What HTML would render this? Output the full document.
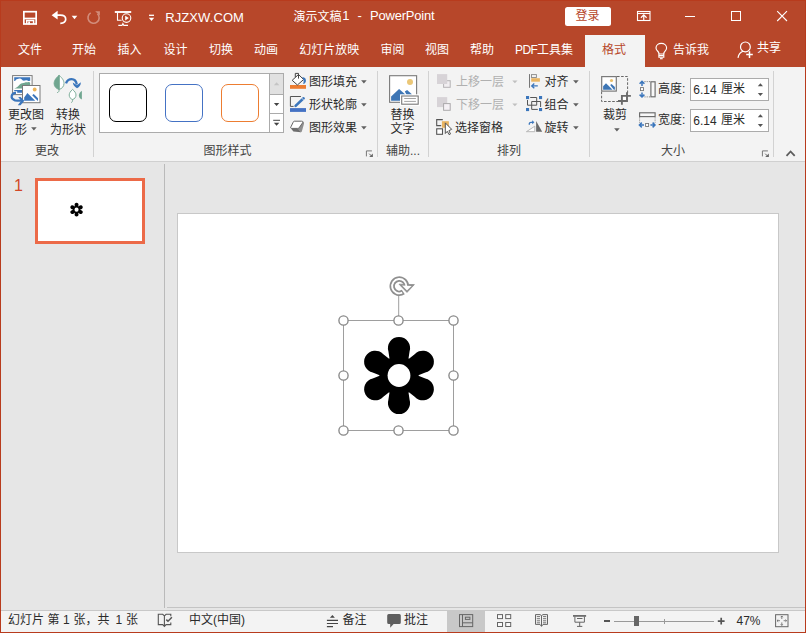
<!DOCTYPE html>
<html lang="zh-CN"><head><meta charset="utf-8"><title>演示文稿1 - PowerPoint</title>
<style>
html,body{margin:0;padding:0;}
body{width:806px;height:633px;overflow:hidden;background:#E6E6E6;font-family:"Liberation Sans","Noto Sans CJK SC",sans-serif;}
#app{position:relative;width:806px;height:633px;overflow:hidden;background:#E6E6E6;}
.t,.l,.b,.i{position:absolute;}
.t{height:12px;line-height:12px;font-size:12px;white-space:pre;font-family:"Liberation Sans","Noto Sans CJK SC",sans-serif;}
.l{white-space:pre;}
.b{box-sizing:border-box;}
</style></head>
<body>
<div id="app">
<div class="b" style="left:0px;top:0px;width:806px;height:67px;background:#B7472A;"></div>
<div class="b" style="left:585px;top:35px;width:60px;height:32px;background:#F3F3F3;"></div>
<div class="b" style="left:0px;top:67px;width:806px;height:95px;background:#F3F3F3;border-bottom:1px solid #D0D0D0;"></div>
<div class="b" style="left:0px;top:610px;width:806px;height:23px;background:#F3F3F3;border-top:1px solid #C8C8C8;"></div>
<div class="l" style="left:165.3px;top:11.2px;color:#FFFFFF;font-size:13px;line-height:13px;letter-spacing:0.08px;">RJZXW.COM</div>
<div class="t" style="left:293.5px;top:10.5px;color:#FFFFFF;">演示文稿</div>
<div class="l" style="left:342.3px;top:9.3px;color:#FFFFFF;font-size:13px;line-height:13px;">1</div>
<div class="l" style="left:357.6px;top:9.3px;color:#FFFFFF;font-size:13px;line-height:13px;">-</div>
<div class="l" style="left:370px;top:9.3px;color:#FFFFFF;font-size:13px;line-height:13px;letter-spacing:-0.22px;">PowerPoint</div>
<div class="b" style="left:565px;top:7px;width:46px;height:18.7px;background:#FFFFFF;border-radius:2.5px;"></div>
<div class="t" style="left:575.5px;top:10.1px;color:#B7472A;">登录</div>
<svg class="i" style="left:20px;top:8px" width="20" height="20" viewBox="0 0 20 20"><g fill="none" stroke="#fff" stroke-width="1.7"><rect x="3.85" y="3.7" width="12.3" height="12.3"/><path d="M4 10.5H16"/><path d="M6.7 16V12.6H13.6V16" stroke-width="1.5"/></g><rect x="8.2" y="13.4" width="1.8" height="3" fill="#fff"/></svg>
<svg class="i" style="left:50px;top:8px" width="20" height="18" viewBox="0 0 20 18"><path d="M3 7.2H10.3C13.6 7.2 15.7 8.9 15.7 11.2C15.7 13.5 13.6 15.2 10.3 15.3" fill="none" stroke="#fff" stroke-width="1.7"/><path d="M1.6 7.2L7.6 2.8V11.4Z" fill="#fff"/></svg>
<svg class="i" style="left:71px;top:15px" width="7" height="5" viewBox="0 0 7 5"><path d="M0.7 0.8H6.3L3.5 4.3Z" fill="#fff"/></svg>
<svg class="i" style="left:85px;top:8px" width="18" height="18" viewBox="0 0 18 18"><g opacity="0.38"><path d="M5.7 4.9A5.6 5.6 0 1 0 12.5 5.7" fill="none" stroke="#fff" stroke-width="1.6"/><path d="M10.2 3.3H14.9V7.6Z" fill="#fff"/></g></svg>
<svg class="i" style="left:113px;top:9px" width="20" height="18" viewBox="0 0 20 18"><g fill="none" stroke="#fff"><path d="M1.8 3H18.2" stroke-width="1.9"/><path d="M4.5 3.5V11.2H8.6" stroke-width="1.1"/><circle cx="13.5" cy="9.1" r="4.3" stroke-width="1.1"/><path d="M5.3 16.4H9L9.9 14.6L10.8 16.4H15" stroke-width="1.1"/></g><path d="M12.2 6.7L15.8 9.1L12.2 11.5Z" fill="#fff"/></svg>
<svg class="i" style="left:147px;top:13px" width="9" height="9" viewBox="0 0 9 9"><path d="M2 2.3H7" stroke="#fff" stroke-width="1.3"/><path d="M1.8 4.8H7.2L4.5 8.1Z" fill="#fff"/></svg>
<svg class="i" style="left:635px;top:9px" width="18" height="14" viewBox="0 0 18 14"><g fill="none" stroke="#fff" stroke-width="1.1"><rect x="2.5" y="2.5" width="12.5" height="9"/><path d="M2.5 4.5H15"/><path d="M8.75 11.5V6.1M5.9 8.7L8.75 5.9L11.6 8.7" stroke-width="1.2"/></g></svg>
<div class="b" style="left:685px;top:16px;width:10px;height:1px;background:#fff;"></div>
<div class="b" style="left:731px;top:11px;width:10px;height:10px;border:1px solid #fff;"></div>
<svg class="i" style="left:775px;top:9px" width="14" height="14" viewBox="0 0 14 14"><path d="M2.2 2.2L12 12M12 2.2L2.2 12" stroke="#fff" stroke-width="1.1" fill="none"/></svg>
<svg class="i" style="left:653px;top:41px" width="17" height="20" viewBox="0 0 17 20"><g fill="none" stroke="#fff" stroke-width="1.15"><path d="M5.9 13V12.2C5.9 10.6 3 9.6 3 6.9C3 4.2 5.4 2.4 8.3 2.4C11.2 2.4 13.6 4.2 13.6 6.9C13.6 9.6 10.8 10.6 10.8 12.2V13"/><path d="M5.9 13H10.8V16.2H5.9Z"/><path d="M5.9 14.6H10.8"/><path d="M7 17.7H9.7"/></g></svg>
<svg class="i" style="left:735px;top:40px" width="20" height="20" viewBox="0 0 20 20"><g fill="none" stroke="#fff" stroke-width="1.2"><circle cx="10.4" cy="6.9" r="4.9"/><path d="M3 17.8C3.6 14.2 5.6 12.2 8 11.3"/><path d="M11.2 14.6H17.8M14.5 11.3V17.9" stroke-width="1.5"/></g></svg>
<div class="t" style="left:18px;top:44px;color:#FFFFFF;">文件</div>
<div class="t" style="left:72px;top:44px;color:#FFFFFF;">开始</div>
<div class="t" style="left:117.5px;top:44px;color:#FFFFFF;">插入</div>
<div class="t" style="left:163.5px;top:44px;color:#FFFFFF;">设计</div>
<div class="t" style="left:209px;top:44px;color:#FFFFFF;">切换</div>
<div class="t" style="left:254px;top:44px;color:#FFFFFF;">动画</div>
<div class="t" style="left:299.3px;top:44px;color:#FFFFFF;">幻灯片放映</div>
<div class="t" style="left:380.5px;top:44px;color:#FFFFFF;">审阅</div>
<div class="t" style="left:425px;top:44px;color:#FFFFFF;">视图</div>
<div class="t" style="left:470px;top:44px;color:#FFFFFF;">帮助</div>
<div class="l" style="left:515px;top:44.4px;color:#FFFFFF;font-size:12px;line-height:12px;letter-spacing:-0.6px;">PDF</div>
<div class="t" style="left:537px;top:44px;color:#FFFFFF;">工具集</div>
<div class="t" style="left:602px;top:44px;color:#B7472A;">格式</div>
<div class="t" style="left:673px;top:44.2px;color:#FFFFFF;">告诉我</div>
<div class="t" style="left:757px;top:42px;color:#FFFFFF;">共享</div>
<div class="b" style="left:93px;top:71px;width:1px;height:86px;background:#D2D2D2;"></div>
<div class="b" style="left:377px;top:71px;width:1px;height:86px;background:#D2D2D2;"></div>
<div class="b" style="left:428px;top:71px;width:1px;height:86px;background:#D2D2D2;"></div>
<div class="b" style="left:589px;top:71px;width:1px;height:86px;background:#D2D2D2;"></div>
<div class="b" style="left:773px;top:71px;width:1px;height:86px;background:#D2D2D2;"></div>
<div class="t" style="left:35px;top:145px;color:#444444;">更改</div>
<div class="t" style="left:203.5px;top:145px;color:#444444;">图形样式</div>
<div class="t" style="left:386px;top:145px;color:#444444;">辅助</div>
<div class="l" style="left:410px;top:145px;color:#444444;font-size:12px;line-height:12px;">...</div>
<div class="t" style="left:497px;top:145px;color:#444444;">排列</div>
<div class="t" style="left:661px;top:145px;color:#444444;">大小</div>
<svg class="i" style="left:4px;top:70px" width="45" height="38" viewBox="0 0 45 38">
<rect x="8.6" y="5.6" width="19.5" height="19" fill="#fff" stroke="#7A7A7A" stroke-width="1"/>
<path d="M10.2 7.2H26.2V10.8C24.5 11.4 23.5 10 22 10.2C20.5 10.5 20 11.2 18.5 10.3C17.5 8.3 15 7.9 13.5 9C12.2 9.2 11.6 10 11.2 11H10.2Z" fill="#3B76BC"/>
<path d="M10.2 18.4C13 17.8 14.5 16 16 14.2C17.5 12.8 19 13.4 20.5 12.8C22 11.8 23.5 12.6 24.5 12C25.5 11.8 26 12.5 26.2 13.2V18.4Z" fill="#70A690"/>
<path d="M10.2 20H26.2V22.8H13.2V21.2H10.2Z" fill="#3B76BC"/>
<rect x="18.5" y="15.5" width="17.5" height="17.2" fill="#fff" stroke="#7A7A7A" stroke-width="1"/>
<circle cx="30.7" cy="19.5" r="1.9" fill="#EDB458"/>
<path d="M20.2 30.7V27.5L23.4 23.1L31.2 30.7Z" fill="#3B76BC"/>
<path d="M28.2 25.3L29.7 24L34 28.3V30.7H33.6Z" fill="#3B76BC"/>
<path d="M12 22.8C7.5 22.6 5.5 28.6 11 30.3C12.5 30.7 14.5 30.7 17.5 30.7" fill="none" stroke="#3B76BC" stroke-width="2.3"/>
<path d="M14.2 27H16.6L20.3 30.7L16.6 35.2H13.8L17.2 30.7Z" fill="#3B76BC"/>
</svg>
<svg class="i" style="left:48px;top:70px" width="45" height="38" viewBox="0 0 45 38">
<path d="M11.1 5.3C14.8 8.5 16 11 16 13.5C16 16.5 14 18.6 11.1 19.5Z" fill="#fff" stroke="#70A690" stroke-width="0.9"/>
<path d="M11.1 5.3C7.4 8.5 6.1 11 6.1 13.5C6.1 16.5 8.2 18.6 11.1 19.5Z" fill="#70A690" stroke="#70A690" stroke-width="0.9"/>
<path d="M11.1 19.5C11.1 21.5 10.6 22.4 9.2 22.6" fill="none" stroke="#70A690" stroke-width="0.9"/>
<path d="M18 13.3C20 8 27.5 7 28.8 14.5" fill="none" stroke="#3B76BC" stroke-width="2.3"/>
<path d="M24.8 12.6L28.9 15.2L32.8 12.2C33 15 31.5 17 29 18.2C26.5 17 25 15.2 24.8 12.6Z" fill="#3B76BC"/>
<path d="M24.6 19.4C27 21.5 28 23.3 28 25C28 27.2 26.7 28.9 24.6 29.5C22.5 28.9 21.2 27.2 21.2 25C21.2 23.3 22.2 21.5 24.6 19.4Z" fill="#fff" stroke="#70A690" stroke-width="0.9"/>
<path d="M24.6 29.5C24.6 31.4 24.2 32.3 23.2 32.6" fill="none" stroke="#70A690" stroke-width="0.9"/>
<path d="M33.9 20.8C31.6 22.6 30.9 24 30.9 25.4C30.9 27.2 32 28.7 33.9 29.4Z" fill="#70A690"/>
</svg>
<svg class="i" style="left:31px;top:127px" width="6" height="4" viewBox="0 0 6 4"><path d="M0.1 0.2H5.7L2.9 3.4Z" fill="#606060"/></svg>
<div class="t" style="left:8px;top:109px;color:#2B2B2B;">更改图</div>
<div class="t" style="left:15px;top:123.5px;color:#2B2B2B;">形</div>
<div class="t" style="left:56px;top:109px;color:#2B2B2B;">转换</div>
<div class="t" style="left:50px;top:123.5px;color:#2B2B2B;">为形状</div>
<div class="b" style="left:99px;top:73px;width:185px;height:60px;background:#FFFFFF;border:1px solid #ABABAB;"></div>
<div class="b" style="left:269px;top:74px;width:1px;height:58px;background:#ABABAB;"></div>
<div class="b" style="left:270px;top:74px;width:13px;height:20px;background:#E1E1E1;"></div>
<div class="b" style="left:270px;top:94px;width:13px;height:1px;background:#ABABAB;"></div>
<div class="b" style="left:270px;top:113px;width:13px;height:1px;background:#ABABAB;"></div>
<div class="b" style="left:109px;top:84px;width:38px;height:38px;border:1px solid #000000;border-radius:7px;"></div>
<div class="b" style="left:165px;top:84px;width:38px;height:38px;border:1px solid #4472C4;border-radius:7px;"></div>
<div class="b" style="left:221px;top:84px;width:38px;height:38px;border:1px solid #ED7D31;border-radius:7px;"></div>
<svg class="i" style="left:270px;top:74px" width="13" height="58" viewBox="0 0 13 58">
<path d="M3.9 11.2L6.6 8.2L9.3 11.2Z" fill="#C4C4C4"/>
<path d="M3.9 29.1H9.3L6.6 32.1Z" fill="#444444"/>
<path d="M3.2 46.3H10" stroke="#444444" stroke-width="1" fill="none"/>
<path d="M3.9 48.8H9.3L6.6 51.8Z" fill="#444444"/>
</svg>
<svg class="i" style="left:288px;top:70px" width="22" height="22" viewBox="0 0 22 22">
<rect x="2" y="15" width="16" height="3.8" fill="#ED7D31"/>
<path d="M4.2 10.3L10.5 4.5L15.6 9.5L9.4 15Z" fill="#fff" stroke="#444444" stroke-width="1"/>
<path d="M7.3 7.2V3.4H10.5V8.6" fill="none" stroke="#444444" stroke-width="1"/>
<path d="M14.2 7C17 7.2 18.3 9 17.9 11.2C17.6 12.8 16.5 13.8 15.1 14.1C15.6 12.6 15.9 11.2 15.4 9.7Z" fill="#3B76BC"/>
</svg>
<svg class="i" style="left:288px;top:93px" width="22" height="22" viewBox="0 0 22 22">
<rect x="2" y="15.1" width="16" height="3.8" fill="#4472C4"/>
<path d="M12.9 3.5H2.4V13.4H5.6" fill="none" stroke="#555" stroke-width="1"/>
<path d="M7.6 12.9L15.6 5.3" stroke="#3B76BC" stroke-width="2.6" stroke-linecap="round" fill="none"/>
<path d="M6.9 13.7L7.6 11.6L9.2 13Z" fill="#3B76BC"/>
<path d="M13.6 4.9L16 7.4" stroke="#F3F3F3" stroke-width="0.7" fill="none"/>
</svg>
<svg class="i" style="left:288px;top:116px" width="22" height="22" viewBox="0 0 22 22">
<path d="M2.8 12.3L5.4 15.6L13 16.2L10 12.3Z" fill="#6E6E6E"/>
<path d="M14.4 5.2C16 5.8 16.4 7 15.8 8.6L13.9 15.2C13.6 16 13.2 16.3 12.6 16.2L9.8 12.4Z" fill="#8E8E8E"/>
<path d="M6.4 5.2H13.6C14.9 5.2 15.1 5.9 14.5 6.9L11.1 11.8C10.7 12.3 10.3 12.4 9.7 12.4H3.9C2.6 12.4 2.3 11.8 2.9 10.9L5.2 6.2C5.5 5.5 5.8 5.2 6.4 5.2Z" fill="#fff" stroke="#666" stroke-width="1"/>
</svg>
<svg class="i" style="left:360.5px;top:80px" width="6" height="4" viewBox="0 0 6 4"><path d="M0.1 0.2H5.7L2.9 3.4Z" fill="#606060"/></svg>
<svg class="i" style="left:360.5px;top:103px" width="6" height="4" viewBox="0 0 6 4"><path d="M0.1 0.2H5.7L2.9 3.4Z" fill="#606060"/></svg>
<svg class="i" style="left:360.5px;top:126px" width="6" height="4" viewBox="0 0 6 4"><path d="M0.1 0.2H5.7L2.9 3.4Z" fill="#606060"/></svg>
<svg class="i" style="left:365px;top:149.5px" width="9" height="8" viewBox="0 0 9 8"><path d="M1.4 6.4V0.9H6.9" fill="none" stroke="#777" stroke-width="1"/><path d="M4.2 3.7L6.4 5.9" stroke="#666" stroke-width="1"/><path d="M7.9 3.6V7.1H4.2Z" fill="#666"/></svg>
<svg class="i" style="left:761px;top:149.5px" width="9" height="8" viewBox="0 0 9 8"><path d="M1.4 6.4V0.9H6.9" fill="none" stroke="#777" stroke-width="1"/><path d="M4.2 3.7L6.4 5.9" stroke="#666" stroke-width="1"/><path d="M7.9 3.6V7.1H4.2Z" fill="#666"/></svg>
<div class="t" style="left:309px;top:75.5px;color:#2B2B2B;">图形填充</div>
<div class="t" style="left:309px;top:98.5px;color:#2B2B2B;">形状轮廓</div>
<div class="t" style="left:309px;top:121.5px;color:#2B2B2B;">图形效果</div>
<svg class="i" style="left:386px;top:72px" width="36" height="36" viewBox="0 0 36 36">
<rect x="3.6" y="3.7" width="27" height="26.6" fill="#fff" stroke="#7A7A7A" stroke-width="1.1"/>
<circle cx="24" cy="9.9" r="3" fill="#EBC777"/>
<path d="M5.1 28.7V24.4L13.1 17.1L18.5 21.8L21 24.5V28.7Z" fill="#3E76B5"/>
<path d="M18.8 19.6L21.1 18.1L25.6 21.9L26 24.5H21.5Z" fill="#3E76B5"/>
<rect x="15.2" y="23.5" width="17.5" height="9.2" fill="#fff" stroke="#fff" stroke-width="2.4"/>
<rect x="15.7" y="24" width="16.5" height="8.2" fill="#fff" stroke="#7A7A7A" stroke-width="1.1"/>
<path d="M18.2 26.5H29.9M18.2 29.4H29.9" stroke="#9A9A9A" stroke-width="0.9" fill="none"/>
</svg>
<svg class="i" style="left:435px;top:72px" width="18" height="18" viewBox="0 0 18 18">
<rect x="8.6" y="8.7" width="6.6" height="6.6" fill="#F1EEF1" stroke="#B4B2B4" stroke-width="1"/>
<rect x="2" y="2.1" width="10.2" height="9.9" fill="#D7D3D7"/>
</svg>
<svg class="i" style="left:435px;top:95px" width="18" height="18" viewBox="0 0 18 18">
<rect x="2" y="2.1" width="10.2" height="10" fill="#D7D3D7"/>
<rect x="8.6" y="8.6" width="6.6" height="6.7" fill="#F5F1F5" stroke="#ABA9AB" stroke-width="1"/>
</svg>
<svg class="i" style="left:434px;top:117px" width="20" height="20" viewBox="0 0 20 20">
<path d="M8.8 2.6H2.7V8.6H7.2" fill="none" stroke="#555" stroke-width="1.1"/>
<rect x="2.7" y="11.8" width="5.8" height="5.5" fill="#fff" stroke="#555" stroke-width="1.1"/>
<rect x="7.9" y="4.2" width="7" height="6.6" fill="#E9B563"/>
<path d="M11.3 5.9V16.5L13.3 14.3L15 17.6L16.5 17L14.9 13.7L17.7 12.3Z" fill="#fff" stroke="#555" stroke-width="1"/>
</svg>
<svg class="i" style="left:512.3px;top:80px" width="6" height="4" viewBox="0 0 6 4"><path d="M0.3 0.4H5.5L2.9 3.2Z" fill="#C0C0C0"/></svg>
<svg class="i" style="left:512.3px;top:103px" width="6" height="4" viewBox="0 0 6 4"><path d="M0.3 0.4H5.5L2.9 3.2Z" fill="#C0C0C0"/></svg>
<svg class="i" style="left:526px;top:72px" width="18" height="18" viewBox="0 0 18 18">
<path d="M3.5 2.1V15.8" stroke="#777" stroke-width="1" fill="none"/>
<rect x="5.5" y="2.6" width="4.9" height="2.9" fill="none" stroke="#888" stroke-width="0.9"/>
<rect x="5.2" y="6.2" width="8.7" height="3.5" fill="#E9B563"/>
<path d="M11.8 13.9H6M8.3 11.5L5.7 13.9L8.3 16.3" fill="none" stroke="#3B76BC" stroke-width="1.3"/>
</svg>
<svg class="i" style="left:524px;top:94px" width="20" height="20" viewBox="0 0 20 20">
<g fill="#3B76BC"><rect x="2" y="2" width="3.1" height="3.1"/><rect x="15" y="2" width="3.1" height="3.1"/><rect x="2" y="14" width="3.1" height="3.1"/><rect x="15" y="14" width="3.1" height="3.1"/></g>
<g fill="none" stroke="#555" stroke-width="1"><path d="M6.2 3.5H12.7V11.2H3.5V6"/><path d="M16.6 13V7.5H7.7V15.4H13.8"/></g>
</svg>
<svg class="i" style="left:524px;top:118px" width="20" height="16" viewBox="0 0 20 16">
<path d="M2.4 13.7H10.8V8.2Z" fill="#fff" stroke="#B0B0B0" stroke-width="0.9"/>
<path d="M12.1 3V13.8H18.2Z" fill="#6A6A6A"/>
<path d="M5.3 6.8V5.8C5.3 4.8 6 4.3 7 4.3H9" fill="none" stroke="#3B76BC" stroke-width="1.3"/>
<path d="M8.2 2.3L10.4 4.3L8.2 6.3Z" fill="#3B76BC"/>
</svg>
<svg class="i" style="left:572.7px;top:80px" width="6" height="4" viewBox="0 0 6 4"><path d="M0.1 0.2H5.7L2.9 3.4Z" fill="#606060"/></svg>
<svg class="i" style="left:572.7px;top:103px" width="6" height="4" viewBox="0 0 6 4"><path d="M0.1 0.2H5.7L2.9 3.4Z" fill="#606060"/></svg>
<svg class="i" style="left:572.7px;top:126px" width="6" height="4" viewBox="0 0 6 4"><path d="M0.1 0.2H5.7L2.9 3.4Z" fill="#606060"/></svg>
<div class="t" style="left:390.5px;top:109px;color:#2B2B2B;">替换</div>
<div class="t" style="left:390.5px;top:123px;color:#2B2B2B;">文字</div>
<div class="t" style="left:456px;top:75.5px;color:#B0B0B0;">上移一层</div>
<div class="t" style="left:456px;top:98.5px;color:#B0B0B0;">下移一层</div>
<div class="t" style="left:455px;top:121.5px;color:#2B2B2B;">选择窗格</div>
<div class="t" style="left:544.5px;top:75.5px;color:#2B2B2B;">对齐</div>
<div class="t" style="left:544.5px;top:98.5px;color:#2B2B2B;">组合</div>
<div class="t" style="left:544.5px;top:121.5px;color:#2B2B2B;">旋转</div>
<svg class="i" style="left:598px;top:72px" width="36" height="36" viewBox="0 0 36 36">
<path d="M19 4.5H29.6V21M3.6 19.6V29.5H20" fill="none" stroke="#666" stroke-width="1" stroke-dasharray="2.6 1.5"/>
<rect x="3.7" y="4.6" width="14.6" height="14.5" fill="#fff" stroke="#7A7A7A" stroke-width="1.2"/>
<circle cx="13.5" cy="8.5" r="1.6" fill="#EBC06A"/>
<path d="M5.1 17.7V14.2L8 11.3L14.6 17.7Z" fill="#3E76B5"/>
<path d="M12.2 13L13.5 12.1L16.9 15.1V17.7H15.8Z" fill="#3E76B5"/>
<rect x="24" y="24" width="5" height="5" fill="#fff"/>
<path d="M29 20.2V29H20M23.9 32.8V23.9H32.9" fill="none" stroke="#6A6A6A" stroke-width="1.9"/>
</svg>
<svg class="i" style="left:614px;top:127.5px" width="6" height="4" viewBox="0 0 6 4"><path d="M0.1 0.2H5.7L2.9 3.4Z" fill="#606060"/></svg>
<svg class="i" style="left:636px;top:78px" width="22" height="22" viewBox="0 0 22 22">
<rect x="14.9" y="3.8" width="4.2" height="15" fill="#F8F8F8" stroke="#6A6A6A" stroke-width="1.15"/>
<path d="M8.5 3.6H14M8.5 18.9H14" stroke="#777" stroke-width="1" stroke-dasharray="1 1.2" fill="none"/>
<rect x="4.5" y="9.6" width="3" height="3" fill="#fff" stroke="#777" stroke-width="0.9"/>
<path d="M6 8V4M3.6 5.8L6 3.4L8.4 5.8M6 14.4V18.4M3.6 16.6L6 19L8.4 16.6" fill="none" stroke="#3B76BC" stroke-width="1.5"/>
</svg>
<svg class="i" style="left:636px;top:109px" width="22" height="22" viewBox="0 0 22 22">
<rect x="3.6" y="3.8" width="15.5" height="3.8" fill="#F8F8F8" stroke="#6A6A6A" stroke-width="1.15"/>
<path d="M3.6 8.4V13.6M19.1 8.4V13.6" stroke="#777" stroke-width="1" stroke-dasharray="1 1.2" fill="none"/>
<rect x="9.6" y="14.5" width="3" height="3" fill="#fff" stroke="#777" stroke-width="0.9"/>
<path d="M8 16H3.8M5.8 13.6L3.4 16L5.8 18.4M14.4 16H18.6M16.6 13.6L19 16L16.6 18.4" fill="none" stroke="#3B76BC" stroke-width="1.5"/>
</svg>
<svg class="i" style="left:784px;top:148px" width="14" height="11" viewBox="0 0 14 11"><path d="M2.5 7.8L6.6 3.5L10.7 7.8" fill="none" stroke="#5C5C5C" stroke-width="1.8"/></svg>
<div class="t" style="left:603px;top:109px;color:#2B2B2B;">裁剪</div>
<div class="t" style="left:658px;top:83px;color:#2B2B2B;">高度</div>
<div class="l" style="left:682px;top:83px;color:#2B2B2B;font-size:12px;line-height:12px;">:</div>
<div class="t" style="left:658px;top:114px;color:#2B2B2B;">宽度</div>
<div class="l" style="left:682px;top:114px;color:#2B2B2B;font-size:12px;line-height:12px;">:</div>
<div class="b" style="left:690px;top:78px;width:79px;height:23px;background:#FFFFFF;border:1px solid #ABABAB;"></div>
<div class="l" style="left:693.3px;top:83.6px;color:#2B2B2B;font-size:12px;line-height:12px;">6.14</div>
<div class="t" style="left:721px;top:83px;color:#2B2B2B;">厘米</div>
<svg class="i" style="left:757px;top:78px" width="7" height="23" viewBox="0 0 7 23"><path d="M0.8 8.3L3.4 5.2L6 8.3Z" fill="#555"/><path d="M0.8 14.9H6L3.4 18Z" fill="#555"/></svg>
<div class="b" style="left:690px;top:109px;width:79px;height:23px;background:#FFFFFF;border:1px solid #ABABAB;"></div>
<div class="l" style="left:693.3px;top:114.6px;color:#2B2B2B;font-size:12px;line-height:12px;">6.14</div>
<div class="t" style="left:721px;top:114px;color:#2B2B2B;">厘米</div>
<svg class="i" style="left:757px;top:109px" width="7" height="23" viewBox="0 0 7 23"><path d="M0.8 8.3L3.4 5.2L6 8.3Z" fill="#555"/><path d="M0.8 14.9H6L3.4 18Z" fill="#555"/></svg>
<div class="l" style="left:14px;top:178.3px;color:#D24726;font-size:16px;line-height:16px;">1</div>
<div class="b" style="left:35px;top:178px;width:110px;height:66px;background:#FFFFFF;border:3px solid #EC6A48;"></div>
<div class="b" style="left:164px;top:164px;width:1px;height:444px;background:#BABABA;"></div>
<div class="b" style="left:177px;top:213px;width:602px;height:340px;background:#FFFFFF;border:1px solid #C8C8C8;"></div>
<div class="b" style="left:167px;top:607px;width:638px;height:1px;background:#C4C4C4;"></div>
<div class="t" style="left:8px;top:613.5px;color:#2B2B2B;">幻灯片</div>
<div class="t" style="left:47.5px;top:613.5px;color:#2B2B2B;">第</div>
<div class="l" style="left:63px;top:613.5px;color:#2B2B2B;font-size:12px;line-height:12px;">1</div>
<div class="t" style="left:73.5px;top:613.5px;color:#2B2B2B;">张，共</div>
<div class="l" style="left:115.5px;top:613.5px;color:#2B2B2B;font-size:12px;line-height:12px;">1</div>
<div class="t" style="left:126px;top:613.5px;color:#2B2B2B;">张</div>
<div class="t" style="left:189px;top:613.5px;color:#2B2B2B;">中文</div>
<div class="l" style="left:213px;top:613.5px;color:#2B2B2B;font-size:12px;line-height:12px;">(</div>
<div class="t" style="left:217px;top:613.5px;color:#2B2B2B;">中国</div>
<div class="l" style="left:241px;top:613.5px;color:#2B2B2B;font-size:12px;line-height:12px;">)</div>
<div class="t" style="left:342.5px;top:613.5px;color:#2B2B2B;">备注</div>
<div class="t" style="left:404px;top:613.5px;color:#2B2B2B;">批注</div>
<div class="b" style="left:447px;top:611px;width:38px;height:21px;background:#C8C8C8;"></div>
<div class="l" style="left:736.5px;top:614.5px;color:#2B2B2B;font-size:12px;line-height:12px;">47%</div>
<svg class="i" style="left:156px;top:612px" width="18" height="17" viewBox="0 0 18 17">
<g fill="none" stroke="#555" stroke-width="1.1">
<path d="M8.4 3.9L6.7 2.3H2.3V12.6H6.7L8.4 14.4L10.1 12.6H14.8V10.4M14.8 4.3V2.3H10.1L8.4 3.9V14"/>
<path d="M10.3 7.6L12 9.3L15.9 5.3" stroke-width="1.5"/>
</g></svg>
<svg class="i" style="left:325px;top:612px" width="15" height="17" viewBox="0 0 15 17">
<path d="M4.9 5.8L7.4 3.1L9.9 5.8Z" fill="#444"/>
<path d="M1.9 8.4H13M1.9 11.5H13M1.9 14.6H8" stroke="#444" stroke-width="1.1" fill="none"/></svg>
<svg class="i" style="left:386px;top:612px" width="17" height="17" viewBox="0 0 17 17"><path d="M2.7 2.1H13.3Q14.8 2.1 14.8 3.6V10.4Q14.8 11.9 13.3 11.9H7.6L4.2 15.7V11.9H2.7Q1.2 11.9 1.2 10.4V3.6Q1.2 2.1 2.7 2.1Z" fill="#5E5E5E"/></svg>
<svg class="i" style="left:457px;top:612px" width="18" height="17" viewBox="0 0 18 17"><g fill="none" stroke="#666666" stroke-width="1"><rect x="2.5" y="2.6" width="13.2" height="12"/><path d="M5.5 2.6V14.6M5.5 10.8H15.7"/><rect x="8.4" y="5.2" width="4.5" height="2.2"/></g></svg>
<svg class="i" style="left:495px;top:612px" width="18" height="17" viewBox="0 0 18 17"><g fill="#FAFAFA" stroke="#666666" stroke-width="1"><rect x="2.5" y="2.6" width="5" height="4"/><rect x="10.7" y="2.6" width="5" height="4"/><rect x="2.5" y="10.5" width="5" height="4"/><rect x="10.7" y="10.5" width="5" height="4"/></g></svg>
<svg class="i" style="left:533px;top:612px" width="18" height="17" viewBox="0 0 18 17"><g fill="none" stroke="#666666" stroke-width="1"><path d="M8.5 3.6L7 2.6H2.5V12.4H7L8.5 14.4L10 12.4H14.5V2.6H10L8.5 3.6V14"/><path d="M3.8 4.6H7M3.8 6.7H7M3.8 8.8H7M3.8 10.8H7M10 4.6H13.2M10 6.7H13.2M10 8.8H13.2M10 10.8H13.2" stroke-width="0.9"/></g></svg>
<svg class="i" style="left:571px;top:612px" width="18" height="17" viewBox="0 0 18 17"><g fill="none" stroke="#666666"><path d="M2 3.9H15.1" stroke-width="1.7"/><path d="M3.9 4.5V10.2H13.4V4.5M8.7 10.2V14.4M6 14.4H11.3M6 6.5H11.5" stroke-width="1"/></g></svg>
<div class="b" style="left:604px;top:620px;width:6px;height:2px;background:#555;"></div>
<div class="b" style="left:614px;top:621px;width:100px;height:1px;background:#999;"></div>
<div class="b" style="left:664px;top:619px;width:1px;height:5px;background:#999;"></div>
<div class="b" style="left:634px;top:615.5px;width:5px;height:10.5px;background:#666;"></div>
<svg class="i" style="left:716px;top:615px" width="12" height="12" viewBox="0 0 12 12"><path d="M1.8 6.2H8.6M5.2 2.8V9.6" stroke="#555" stroke-width="1.7" fill="none"/></svg>
<svg class="i" style="left:773px;top:612px" width="18" height="17" viewBox="0 0 18 17"><g fill="none" stroke="#666666" stroke-width="1"><rect x="2.6" y="2.7" width="12.4" height="12"/>
<path d="M8.8 4V7M7.7 5.2L8.8 4L9.9 5.2M8.8 13.4V10.4M7.7 12.2L8.8 13.4L9.9 12.2M4 8.7H7M5.2 7.6L4 8.7L5.2 9.8M13.6 8.7H10.6M12.4 7.6L13.6 8.7L12.4 9.8" stroke-width="0.8"/></g></svg>
<div class="b" style="left:0px;top:0px;width:806px;height:633px;border:1px solid #B83B1D;"></div>
<svg class="i" style="left:177px;top:213px" width="602" height="339" viewBox="0 0 602 339"><g fill="#000"><g transform="translate(222 162.5) scale(1)"><path d="M-8.3 -9L-10.6 -24.2A11.1 11.1 0 1 1 10.6 -24.2L8.3 -9Z" transform="rotate(0)"/><path d="M-8.3 -9L-10.6 -24.2A11.1 11.1 0 1 1 10.6 -24.2L8.3 -9Z" transform="rotate(60)"/><path d="M-8.3 -9L-10.6 -24.2A11.1 11.1 0 1 1 10.6 -24.2L8.3 -9Z" transform="rotate(120)"/><path d="M-8.3 -9L-10.6 -24.2A11.1 11.1 0 1 1 10.6 -24.2L8.3 -9Z" transform="rotate(180)"/><path d="M-8.3 -9L-10.6 -24.2A11.1 11.1 0 1 1 10.6 -24.2L8.3 -9Z" transform="rotate(240)"/><path d="M-8.3 -9L-10.6 -24.2A11.1 11.1 0 1 1 10.6 -24.2L8.3 -9Z" transform="rotate(300)"/><circle r="19.5"/><circle r="11.4" fill="#fff"/></g></g><g fill="none" stroke="#9E9E9E" stroke-width="1"><rect x="166.5" y="107.5" width="110" height="110"/><path d="M221.7 82.5V107"/></g><circle cx="166.5" cy="107.5" r="4.6" fill="#fff" stroke="#888" stroke-width="1.35"/><circle cx="166.5" cy="162.5" r="4.6" fill="#fff" stroke="#888" stroke-width="1.35"/><circle cx="166.5" cy="217.5" r="4.6" fill="#fff" stroke="#888" stroke-width="1.35"/><circle cx="221.5" cy="107.5" r="4.6" fill="#fff" stroke="#888" stroke-width="1.35"/><circle cx="221.5" cy="217.5" r="4.6" fill="#fff" stroke="#888" stroke-width="1.35"/><circle cx="276.5" cy="107.5" r="4.6" fill="#fff" stroke="#888" stroke-width="1.35"/><circle cx="276.5" cy="162.5" r="4.6" fill="#fff" stroke="#888" stroke-width="1.35"/><circle cx="276.5" cy="217.5" r="4.6" fill="#fff" stroke="#888" stroke-width="1.35"/></svg>
<svg class="i" style="left:38px;top:181px" width="104" height="60" viewBox="0 0 104 60"><g fill="#000"><g transform="translate(38.55 28.65) scale(0.178)"><path d="M-8.3 -9L-10.6 -24.2A11.1 11.1 0 1 1 10.6 -24.2L8.3 -9Z" transform="rotate(0)"/><path d="M-8.3 -9L-10.6 -24.2A11.1 11.1 0 1 1 10.6 -24.2L8.3 -9Z" transform="rotate(60)"/><path d="M-8.3 -9L-10.6 -24.2A11.1 11.1 0 1 1 10.6 -24.2L8.3 -9Z" transform="rotate(120)"/><path d="M-8.3 -9L-10.6 -24.2A11.1 11.1 0 1 1 10.6 -24.2L8.3 -9Z" transform="rotate(180)"/><path d="M-8.3 -9L-10.6 -24.2A11.1 11.1 0 1 1 10.6 -24.2L8.3 -9Z" transform="rotate(240)"/><path d="M-8.3 -9L-10.6 -24.2A11.1 11.1 0 1 1 10.6 -24.2L8.3 -9Z" transform="rotate(300)"/><circle r="19.5"/><circle r="11.4" fill="#fff"/></g></g></svg>
<svg class="i" style="left:384px;top:272px" width="36" height="30" viewBox="0 0 36 30">
<g fill="none">
<path d="M19.3 20.1A7.15 7.15 0 1 1 22.4 13.2" stroke="#8F8F8F" stroke-width="5.4"/>
<path d="M15 12.2L30.4 12.6L23 20.4Z" fill="#8F8F8F" stroke="#8F8F8F" stroke-width="0.8" stroke-linejoin="round"/>
<path d="M18.2 20.7A7.15 7.15 0 1 1 22.4 14.8" stroke="#fff" stroke-width="1.9"/>
<path d="M18 13.6L27.6 13.9L23 18.6Z" fill="#fff"/>
</g></svg>
</div>
</body></html>
